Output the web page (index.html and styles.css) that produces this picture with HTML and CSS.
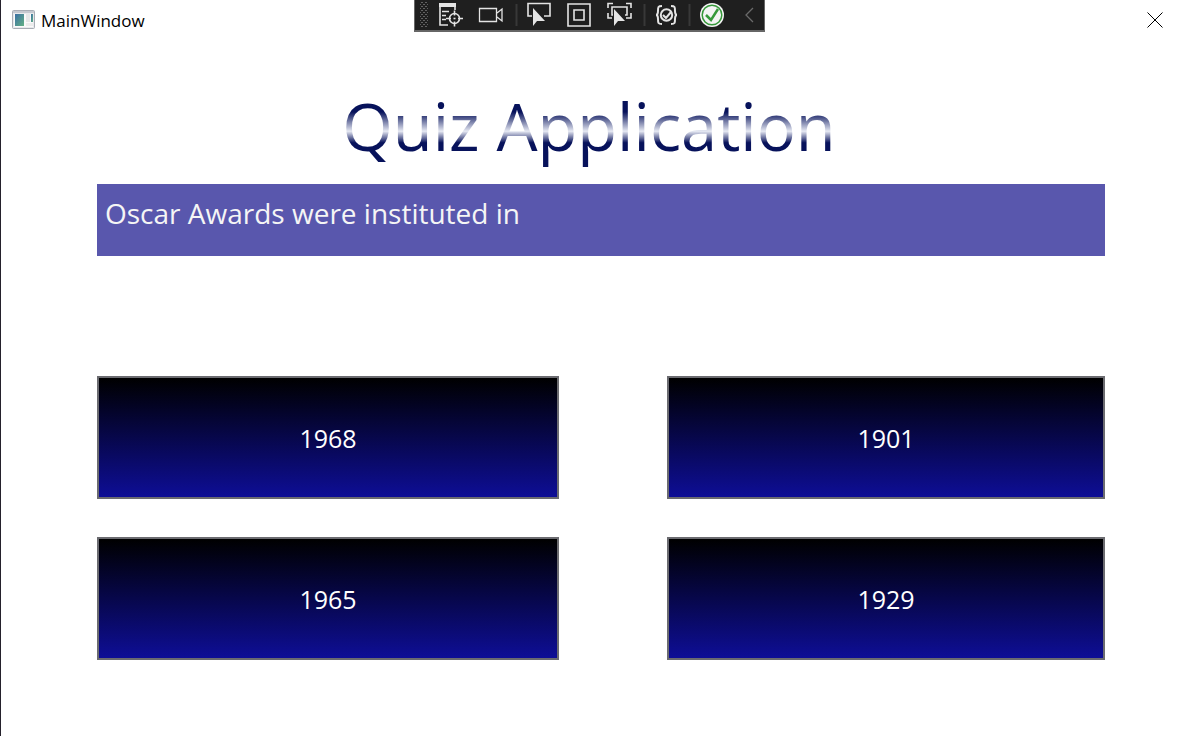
FILE: index.html
```html
<!DOCTYPE html>
<html lang="en">
<head>
<meta charset="utf-8">
<title>MainWindow</title>
<link rel="stylesheet" href="styles.css">
</head>
<body>
<div class="window">
  <header class="titlebar">
    <svg class="app-icon" width="24" height="20" viewBox="0 0 24 20" aria-hidden="true">
      <defs><linearGradient id="pane" x1="0" y1="0" x2="1" y2="1"><stop offset="0" stop-color="#3b6fa5"/><stop offset="1" stop-color="#63b184"/></linearGradient></defs>
      <rect x="0.5" y="0.5" width="22" height="18" rx="1" fill="#e8e9ec" stroke="#a9adb5"/>
      <path d="M1 2h21" stroke="#c6c9d0" stroke-width="2"/>
      <rect x="2" y="4" width="19" height="13" fill="#fafafa"/>
      <rect x="3" y="4" width="9" height="12" fill="url(#pane)"/>
      <rect x="14" y="4" width="4" height="8" fill="#e6e7e8"/>
      <rect x="14" y="13" width="7" height="3" fill="#ececec"/>
      <rect x="19" y="4" width="2" height="8" fill="url(#pane)"/>
    </svg>
    <span class="window-name">MainWindow</span>
    <button class="close" type="button" aria-label="Close">
      <svg width="16" height="16" viewBox="0 0 16 16"><path d="M.5.5l15 15M15.5.5l-15 15" stroke="#000" stroke-width="1"/></svg>
    </button>
  </header>

  <div class="debugbar" role="toolbar" aria-label="Debug">
    <svg width="349" height="30" viewBox="0 0 349 30" fill="none" stroke="#e4e4e4" stroke-width="1.6" aria-hidden="true">
      <defs><pattern id="grip" width="4" height="4" patternUnits="userSpaceOnUse"><path d="M0 0h2v1h-2zM2 2h2v1h-2z" fill="#626262" stroke="none"/></pattern></defs>
      <rect x="5" y="2" width="8" height="26" fill="url(#grip)" stroke="none"/>
      <path d="M24 3h17v4h-17z" fill="#e4e4e4" stroke="none"/>
      <path d="M25 6v19h8M27 11.500h7M27 15.500h4M27 19.500h4M40 7v3"/>
      <circle cx="39.500" cy="18.500" r="5"/><path d="M39.500 10.500v5M39.500 21.500v5M31 18.500h5M43 18.500h5"/>
      <path d="M38.500 18.500h2"/>
      <path d="M64.500 8.500h17v13h-17zM82 13l5-4v12l-5-4" stroke-width="1.300"/>
      <path d="M101.500 4v22M229.500 4v22M274.500 4v22" stroke="#383838" stroke-width="2"/>
      <path d="M117 16h-4V3.500h22V16h-6" />
      <path d="M118 8v18l4-5h8z" fill="#e4e4e4" stroke="none"/>
      <path d="M153 4h22v22h-22zM159 10h10v10h-10z"/>
      <path d="M193 8V3.500h5M211 3.500h5V8M193 13v5h4M216 13v5h-5M198 15h-1V7h15v8h-2"/>
      <path d="M199 9v17l4-5h7z" fill="#e4e4e4" stroke="none"/>
      <circle cx="251.500" cy="15" r="5.700" stroke-width="2"/>
      <path d="M248 15l3 3 5-6M247 6c-4 0-4 1-4 5 0 3-1 4-2 4 1 0 2 1 2 4 0 4 0 5 4 5M256 6c4 0 4 1 4 5 0 3 1 4 2 4-1 0-2 1-2 4 0 4 0 5-4 5" stroke-width="2"/>
      <circle cx="297" cy="15" r="12" fill="#f4f4f4" stroke="none"/>
      <circle cx="297" cy="15" r="9.800" stroke="#36983a" stroke-width="1.500"/>
      <path d="M291 15l5 5 7-11" stroke="#36983a" stroke-width="2.500"/>
      <path d="M338 8l-7 7 7 7" stroke="#6a6a6a" stroke-width="1.300"/>
    </svg>
  </div>

  <h1 class="quiz-title">Quiz Application</h1>

  <main class="quiz">
    <p class="question">Oscar Awards were instituted in</p>
    <div class="answers">
      <button class="answer" type="button">1968</button>
      <button class="answer" type="button">1901</button>
      <button class="answer" type="button">1965</button>
      <button class="answer" type="button">1929</button>
    </div>
  </main>
</div>
</body>
</html>
```
FILE: styles.css
```css
* { box-sizing: border-box; }

body {
  margin: 0;
  background: #fff;
  font-family: "Open Sans", "Noto Sans", sans-serif;
}

.window {
  position: relative;
  min-height: 100vh;
  border-left: 1px solid #24212c;
}

.titlebar {
  display: flex;
  align-items: center;
  height: 40px;
  padding: 0 14px 0 11px;
}

.window-name {
  margin-left: 5px;
  padding-top: 2px;
  font-size: 17px;
  line-height: 24px;
  color: #000;
}

.close {
  display: flex;
  margin-left: auto;
  padding: 0;
  border: 0;
  background: none;
}

.debugbar {
  position: absolute;
  top: 0;
  right: 0;
  left: 0;
  width: fit-content;
  margin: 0 auto;
  display: flex;
  border: solid #666;
  border-width: 0 1px 2px;
  background: #1f1f1f;
}

.quiz-title {
  width: fit-content;
  margin: 42px auto 14px;
  font-size: 65px;
  font-weight: 400;
  line-height: 88px;
  color: transparent;
  background: linear-gradient(#07125b 34%, #e6e9f3 56%, #07125b 69%);
  -webkit-background-clip: text;
  background-clip: text;
}

.quiz {
  padding: 0 72px 40px 96px;
}

.question {
  min-height: 72px;
  margin: 0 0 120px;
  padding: 9px 8px;
  background: #5957ad;
  color: #f5f5f5;
  font-size: 28px;
  line-height: 40px;
}

.answers {
  display: grid;
  grid-template-columns: 462fr 438fr;
  gap: 38px 108px;
}

.answer {
  height: 123px;
  padding: 1px 0 0;
  border: 2px solid #6b6b70;
  background: linear-gradient(#000, #0e0e96);
  color: #fff;
  font-family: inherit;
  font-size: 25px;
  line-height: 36px;
}
```
